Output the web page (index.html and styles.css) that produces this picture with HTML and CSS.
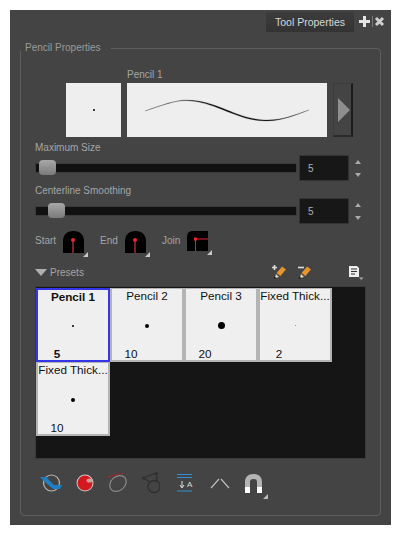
FILE: index.html
```html
<!DOCTYPE html>
<html lang="en">
<head>
    <meta charset="UTF-8">
    <title>Tool Properties</title>
    <link rel="stylesheet" href="styles.css">
</head>
<body>
<div class="panel">
    <div class="tabbar">
        <div class="tab">Tool Properties</div>
        <svg class="tab-plus" width="13" height="13" viewBox="0 0 13 13"><path d="M5 1h3v4h4v3H8v4H5V8H1V5h4z" fill="#e4e4e4"/></svg>
        <div class="tab-sep"></div>
        <svg class="tab-close" width="11" height="11" viewBox="0 0 11 11"><path d="M2 2l7 7M9 2l-7 7" stroke="#cfcfcf" stroke-width="3"/></svg>
    </div>

    <fieldset class="group">
        <legend>Pencil Properties</legend>

        <div class="preview-name">Pencil 1</div>
        <div class="preview-row">
            <div class="preview-tip"><span class="dot dot-1"></span></div>
            <div class="preview-stroke">
                <svg width="200" height="54" viewBox="0 0 200 54">
                    <path d="M18 28C35 22 48 17 60 17C90 17 110 37 140 37C155 37 168 32 182 27C168 32.300 155 37.800 140 38C110 38.500 90 19 60 17.600C48 17.400 35 22.400 18 28z" fill="#000" stroke="#555" stroke-width="0.300"/>
                </svg>
            </div>
            <button class="preview-arrow"><span class="arrow-shape"></span></button>
        </div>

        <div class="field-label">Maximum Size</div>
        <div class="slider-row">
            <div class="track"><span class="handle" style="left: 3px"></span></div>
            <div class="number">5</div>
            <div class="spinner"><span class="spin-up"></span><span class="spin-down"></span></div>
        </div>

        <div class="field-label">Centerline Smoothing</div>
        <div class="slider-row">
            <div class="track"><span class="handle" style="left: 12px"></span></div>
            <div class="number">5</div>
            <div class="spinner"><span class="spin-up"></span><span class="spin-down"></span></div>
        </div>

        <div class="tips-row">
            <span class="tip-label">Start</span>
            <div class="tip-button">
                <svg width="21" height="22" viewBox="0 0 21 22"><path d="M0 22V10C0 4 4 0 10.500 0S21 4 21 10V22z" fill="#000"/><path d="M10 9v13" stroke="#7a1f24" stroke-width="2"/><circle cx="10" cy="9" r="2" fill="#e8262f"/></svg>
            </div>
            <span class="tip-label tip-end">End</span>
            <div class="tip-button">
                <svg width="21" height="22" viewBox="0 0 21 22"><path d="M0 22V10C0 4 4 0 10.500 0S21 4 21 10V22z" fill="#000"/><path d="M10 9v13" stroke="#7a1f24" stroke-width="2"/><circle cx="10" cy="9" r="2" fill="#e8262f"/></svg>
            </div>
            <span class="tip-label tip-join">Join</span>
            <div class="tip-button">
                <svg width="21" height="20" viewBox="0 0 21 20"><path d="M0 20V6C0 2 2 0 6 0H21V20z" fill="#000"/><path d="M8.500 8H21M8.500 8V20" stroke="#e0262d" stroke-width="1"/><rect x="7" y="6.500" width="3" height="3" fill="#e8262f"/></svg>
            </div>
        </div>

        <div class="presets-head">
            <span class="presets-arrow"></span>
            <span class="presets-title">Presets</span>
            <svg class="pencil-add" width="14" height="14" viewBox="0 0 14 14"><path d="M0 2.500h5M2.500 0v5" stroke="#ddd" stroke-width="1.600"/><path d="M12 3L6.500 9.500" stroke="#e8952e" stroke-width="5"/><path d="M4 9l3 3-4 1z" fill="#e9d9b8"/><path d="M2.500 11.500l1.500 1.500-2 1z" fill="#111"/></svg>
            <svg class="pencil-del" width="13" height="14" viewBox="0 0 13 14"><path d="M0 2.500h6" stroke="#ddd" stroke-width="1.600"/><path d="M11 3L5.500 9.500" stroke="#e8952e" stroke-width="5"/><path d="M3 9l3 3-4 1z" fill="#e9d9b8"/><path d="M1.500 11.500l1.500 1.500-2 1z" fill="#111"/></svg>
            <svg class="presets-menu" width="15" height="16" viewBox="0 0 15 16"><path d="M0 2h8l2 2v9H0z" fill="#eee"/><path d="M2 5h6M2 7.500h6M2 10h4" stroke="#333" stroke-width="1"/><path d="M10 13.500h4.500l-2.250 2.500z" fill="#aaa"/></svg>
        </div>

        <div class="preset-grid">
            <div class="preset preset-active">
                <div class="preset-name">Pencil 1</div>
                <div class="preset-dot"><span class="dot dot-1"></span></div>
                <div class="preset-size">5</div>
            </div>
            <div class="preset">
                <div class="preset-name">Pencil 2</div>
                <div class="preset-dot"><span class="dot dot-2"></span></div>
                <div class="preset-size">10</div>
            </div>
            <div class="preset">
                <div class="preset-name">Pencil 3</div>
                <div class="preset-dot"><span class="dot dot-3"></span></div>
                <div class="preset-size">20</div>
            </div>
            <div class="preset">
                <div class="preset-name">Fixed Thick...</div>
                <div class="preset-dot"><span class="dot dot-4"></span></div>
                <div class="preset-size">2</div>
            </div>
            <div class="preset">
                <div class="preset-name">Fixed Thick...</div>
                <div class="preset-dot"><span class="dot dot-2"></span></div>
                <div class="preset-size">10</div>
            </div>
        </div>

        <div class="toolbar">
            <svg width="22" height="18" viewBox="0 0 22 18"><circle cx="11.500" cy="9" r="8" fill="none" stroke="#b5b5b5" stroke-width="1.200"/><path d="M0 3h6l8 8h8l-2 4h-7L5 8z" fill="#1f7fc4"/></svg>
            <svg width="18" height="18" viewBox="0 0 18 18"><circle cx="9" cy="9" r="8.500" fill="#c9c9c9"/><circle cx="9" cy="9" r="7.500" fill="#d3191f"/><ellipse cx="13.500" cy="6.500" rx="3" ry="2" fill="#c9a0a0"/></svg>
            <svg width="20" height="20" viewBox="0 0 20 20"><ellipse cx="10" cy="10.500" rx="9" ry="7" transform="rotate(-40 10 10.500)" fill="none" stroke="#8a8a8a" stroke-width="1.200"/><path d="M0 4L16 0" stroke="#a3262a" stroke-width="1"/></svg>
            <svg width="18" height="22" viewBox="0 0 18 22"><path d="M1.300 6L14.300 1M1.300 6L8 10M14.300 1L15 9" fill="none" stroke="#2f2f2f" stroke-width="1.300"/><circle cx="12" cy="14.500" r="6" fill="none" stroke="#2f2f2f" stroke-width="1.300"/><circle cx="1.500" cy="6" r="1.500" fill="#2f2f2f"/><circle cx="14.300" cy="1.500" r="1.500" fill="#2f2f2f"/></svg>
            <svg class="toolbar-text" width="16" height="18" viewBox="0 0 16 18"><path d="M0 .5h15M0 3.500h15M0 17h15" stroke="#2b93d6" stroke-width="1"/><path d="M5 7v6M3 11l2 3 2-3" fill="none" stroke="#ddd" stroke-width="1"/><text class="toolbar-letter" x="10" y="13">A</text></svg>
            <svg class="toolbar-angle" width="20" height="12" viewBox="0 0 20 12"><path d="M1 11L9 2M11 2l8 9" stroke="#bbb" stroke-width="1.200" fill="none"/></svg>
            <svg class="toolbar-magnet" width="24" height="26" viewBox="0 0 24 26"><path d="M1 19V8C1 3 4 0 9.500 0S18 3 18 8V19H13V8C13 6 12 5 9.500 5S6 6 6 8V19z" fill="#b4b4b4"/><path d="M1 13H6V19H1zM13 13H18V19H13z" fill="#fff"/><path d="M24 20v5h-5z" fill="#bbb"/></svg>
        </div>
    </fieldset>
</div>
</body>
</html>
```

FILE: styles.css
```css
body {
    margin: 10px;
    background-color: #ffffff;
    font-family: 'Liberation Sans', sans-serif;
    font-size: 10px;
    color: #a4a4a4;
}

.panel {
    width: 381px;
    height: 515px;
    box-sizing: border-box;
    padding: 0 10px;
    background-color: #444444;
}

.tabbar {
    display: flex;
    align-items: center;
    justify-content: flex-end;
    height: 21px;
    padding-top: 1px;
    margin-right: -4px;
}

.tab {
    width: 88px;
    height: 20px;
    font-size: 10.5px;
    line-height: 20px;
    text-align: center;
    color: #d8d8d8;
    background: linear-gradient(#3c3c3c, #333333);
}

.tab-plus {
    margin-left: 4px;
}

.tab-sep {
    width: 1px;
    height: 11px;
    margin: 0 1px;
    background-color: #777777;
}

.group {
    margin: 9px 0 0;
    padding: 0 14px;
    height: 475px;
    box-sizing: border-box;
    border: 1px solid #5e5e5e;
    border-radius: 4px;
}

.group legend {
    margin-left: -14px;
    padding: 0 10px 0 4px;
    line-height: 14px;
    color: #9a9a9a;
}

.preview-name {
    margin: 13px 0 2px 92px;
    line-height: 13px;
}

.preview-row {
    display: flex;
    height: 54px;
    margin-left: 31px;
}

.preview-tip,
.preview-stroke {
    display: flex;
    align-items: center;
    justify-content: center;
    background-color: #eeeeee;
}

.preview-tip {
    width: 55px;
    margin-right: 6px;
}

.preview-stroke {
    width: 200px;
    margin-right: 6px;
}

.preview-arrow {
    width: 20px;
    padding: 0 0 0 4px;
    display: flex;
    align-items: center;
    background-color: #444444;
    border: 1px solid #3c3c3c;
    border-right: 2px solid #1c1c1c;
    border-bottom: 2px solid #2a2a2a;
}

.arrow-shape {
    border-left: 12px solid #8f8f8f;
    border-top: 12px solid transparent;
    border-bottom: 12px solid transparent;
}

.dot {
    display: block;
    border-radius: 50%;
    background-color: #000000;
}

.dot-1 {
    width: 2px;
    height: 2px;
}

.dot-2 {
    width: 4px;
    height: 4px;
}

.dot-3 {
    width: 7px;
    height: 7px;
}

.dot-4 {
    width: 1px;
    height: 1px;
    background-color: #777777;
}

.field-label {
    line-height: 14px;
}

.preview-row + .field-label {
    margin-top: 4px;
}

.slider-row + .field-label {
    margin-top: 3px;
}

.slider-row {
    display: flex;
    align-items: center;
    height: 26px;
}

.track {
    position: relative;
    width: 262px;
    height: 10px;
    background-color: #111111;
    box-sizing: border-box;
    border: 1px solid #3a3a3a;
}

.handle {
    position: absolute;
    top: -4px;
    width: 17px;
    height: 15px;
    border-radius: 4px;
    background: linear-gradient(#a8a8a8, #7a7a7a);
}

.number {
    width: 50px;
    height: 26px;
    box-sizing: border-box;
    margin-left: 2px;
    padding-left: 8px;
    line-height: 26px;
    color: #b0b0b0;
    background-color: #171717;
    border: 1px solid #333333;
}

.spinner {
    display: flex;
    flex-direction: column;
    gap: 9px;
    margin-left: 6px;
}

.spin-up {
    border-left: 3px solid transparent;
    border-right: 3px solid transparent;
    border-bottom: 4px solid #aaaaaa;
}

.spin-down {
    border-left: 3px solid transparent;
    border-right: 3px solid transparent;
    border-top: 4px solid #aaaaaa;
}

.tips-row {
    display: flex;
    align-items: flex-start;
    height: 24px;
    margin-top: 7px;
}

.tip-label {
    margin-top: 3px;
    line-height: 14px;
    width: 28px;
}

.tip-end,
.tip-join {
    margin-left: 16px;
    width: 25px;
}

.tip-button {
    position: relative;
    width: 21px;
}

.tip-button::after {
    content: "";
    position: absolute;
    right: -4px;
    bottom: -2px;
    border-left: 5px solid transparent;
    border-bottom: 5px solid #c8c8c8;
}

.presets-head {
    display: flex;
    align-items: center;
    height: 18px;
    margin-top: 8px;
}

.presets-arrow {
    border-left: 6px solid transparent;
    border-right: 6px solid transparent;
    border-top: 7px solid #b0b0b0;
}

.presets-title {
    margin-left: 3px;
    width: 222px;
}

.pencil-del {
    margin-left: 12px;
}

.presets-menu {
    margin-left: 38px;
}

.preset-grid {
    display: grid;
    grid-template-columns: repeat(4, 74px);
    grid-auto-rows: 74px;
    align-content: start;
    width: 331px;
    height: 173px;
    box-sizing: border-box;
    margin-top: 5px;
    padding: 1px 0 0;
    background-color: #151515;
    border: 1px solid #3a3a3a;
}

.preset {
    display: flex;
    flex-direction: column;
    box-sizing: border-box;
    font-size: 11.7px;
    color: #111111;
    background-color: #efefef;
    border: 2px solid #b4b4b4;
    border-top-width: 1px;
}

.preset-active {
    border: 2px solid #3535e8;
    font-weight: bold;
}

.preset-name {
    text-align: center;
    line-height: 13px;
    white-space: nowrap;
}

.preset-dot {
    flex: 1;
    display: flex;
    align-items: center;
    justify-content: center;
    padding-top: 2px;
}

.preset-size {
    width: 38px;
    text-align: center;
    line-height: 13px;
}

.toolbar {
    display: flex;
    align-items: center;
    gap: 14px;
    height: 26px;
    margin: 11px 0 0 5px;
}

.toolbar-text {
    margin-left: 3px;
}

.toolbar-angle {
    margin-left: 3px;
}

.toolbar-letter {
    font-size: 8px;
    fill: #dddddd;
}

.toolbar-magnet {
    margin-top: 7px;
}
```
